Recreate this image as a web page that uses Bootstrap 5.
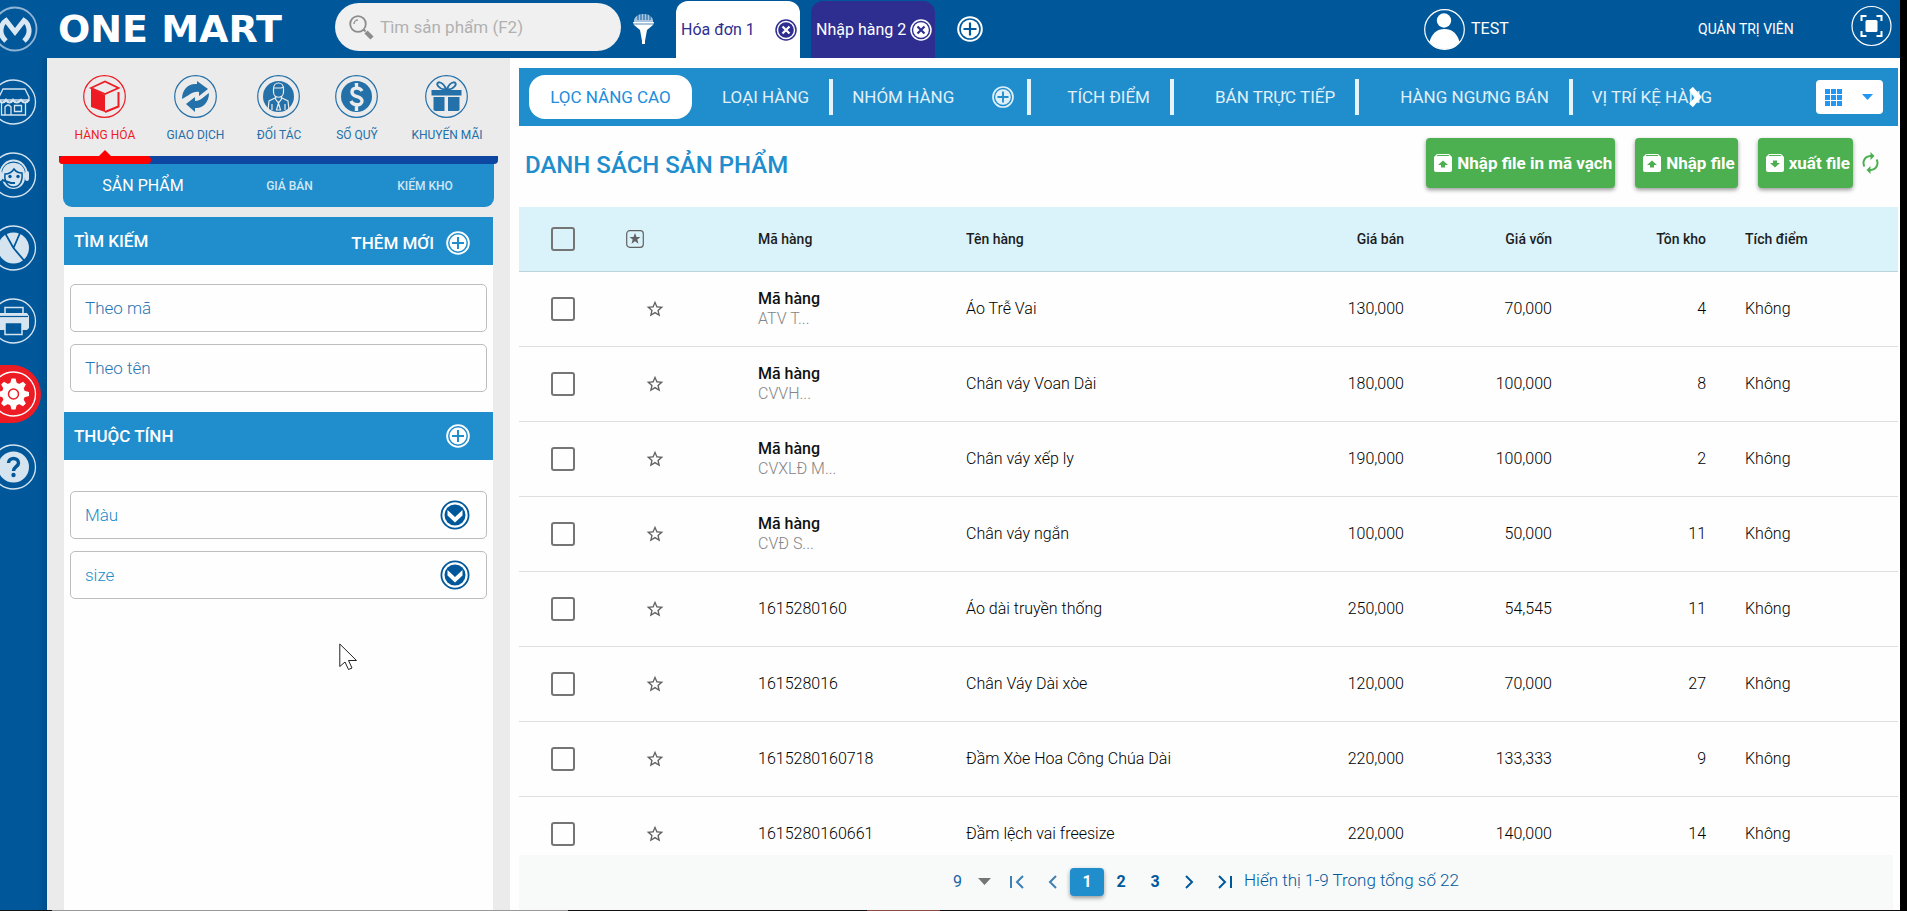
<!DOCTYPE html>
<html lang="vi">
<head>
<meta charset="utf-8">
<meta name="viewport" content="width=device-width, initial-scale=1">
<title>One Mart - Danh sách sản phẩm</title>
<link href="https://cdn.jsdelivr.net/npm/bootstrap@5.3.0/dist/css/bootstrap.min.css" rel="stylesheet">
<style>
:root{--navy:#00589b;--sky:#208dcc;--indigo:#2e2e91;--green:#4caf50}
body{font-family:Roboto,"Liberation Sans",sans-serif;font-size:16px;line-height:20px;color:#1d1d1d;background:#fefefe;border-right:7px solid #000}
button{font-family:inherit}
svg{display:block;flex:none}
a{text-decoration:none}
.plain{background:none;border:0;padding:0;color:inherit}
.fw-md{font-weight:500}
/* header */
.topbar{height:58px;background:var(--navy);color:#fff}
.brand{width:335px;color:#fff;gap:20px;margin-left:-9px}
.brand-name{font:bold 38px/40px "DejaVu Sans",sans-serif}
.search{width:286px;height:48px;margin:3px 0 0 9px;padding:0 0 0 14px;border-radius:24px;background:#f0f0f0;gap:6px}
.search input{flex:1;min-width:0;border:0;background:none;padding:0;font-size:17px;outline:0}
.search input::placeholder{color:#b0b0b0;opacity:1}
.funnel{margin:0 22px 0 12px}
.doc-tab{height:57px;border-radius:12px 12px 0 0;background:#fff;color:var(--indigo);width:124px;padding:0 3px 0 5px}
.doc-tab.alt{background:var(--indigo);color:#fff;margin-left:11px}
.add-doc{margin-left:22px}
.who{gap:6px;margin-left:auto;width:254px}
.role{font-size:14px;width:157px}
/* rail */
.rail{width:47px;background:var(--navy);padding-top:15px;gap:15px;box-shadow:inset -10px 0 8px -8px #003f7499}
.rail a{display:flex;align-items:center;width:41px;height:58px;border-radius:0 29px 29px 0}
.rail a svg{margin-left:-9px}
.rail a.on{background:#ed1c24}
/* side panel */
.side{width:463px;background:#ebebeb;padding:0 17px}
.modules{margin:0 -5px;height:106px;border-bottom:8px solid #0d47a1;border-radius:0 0 4px 4px}
.modules a{min-width:78px;padding:17px 16px 0;color:#2470a8;font-size:12px;gap:7px;position:relative}
.modules a.on{color:#ed1c24}
.modules a.on::before{content:"";position:absolute;left:0;right:0;bottom:-8px;height:8px;background:red;border-radius:4px}
.modules a.on::after{content:"";position:absolute;left:50%;bottom:0;margin-left:-6px;border:6px solid transparent;border-top:0;border-bottom-color:red}
.subtabs{height:43px;background:var(--sky);border-radius:0 0 9px 9px;margin:0 -1px 10px}
.subtabs a{flex:1;text-align:center;color:#d0e7f5;font-size:12px;font-weight:500}
.subtabs a.on{color:#fff;font-size:16px;font-weight:400;flex:0 0 160px}
.subtabs a:last-child{flex:0 0 138px}
.sec-head{height:48px;background:var(--sky);color:#fff;padding:0 23px 0 10px;font-size:17px;font-weight:500}
.sec-body{background:#fefefe;padding:19px 6px;gap:12px}
.sec-body.search-by{padding-bottom:20px}
.sec-body.attrs{padding-top:31px}
.field{height:48px;border:1px solid #bdbdbd;border-radius:5px;position:relative}
.field input,.field select{width:100%;height:100%;border:0;background:none;padding:0 14px;font-size:17px;font-weight:300;color:var(--sky);appearance:none;outline:0}
.field input::placeholder{color:#2a75b3;opacity:1}
.field svg{position:absolute;right:16px;top:8px;pointer-events:none}
.pointer{position:absolute;left:339px;top:643px;pointer-events:none}
/* main */
.work{padding:10px 2px 0 9px}
.filters{height:58px;background:var(--sky);color:#e0f0f9;padding:0 15px 0 10px;font-size:17px}
.filters a{color:inherit;white-space:nowrap}
.filters a.pill{background:#fff;color:#208ddc;width:163px;height:44px;border-radius:16px;margin-right:30px}
.bar{width:4px;height:36px;background:#e6f3fa;margin:0 19px 0 20px;flex:none}
.bar.wide{margin-right:41px}
.bar.after-add{margin:0 36px 0 13px}
.add-group{margin-left:38px}
.more{position:absolute;right:10px;top:0}
.view{width:67px;height:34px;background:#fff;border-radius:4px;padding:0 10px 0 9px;color:#2196f3}
.title{color:var(--sky);font-size:24px;line-height:32px;font-weight:500;margin:0;padding-top:4px}
.headline{height:81px;padding:0 18px 7px 6px}
.acts{gap:20px}
.act{height:50px;background:var(--green);color:#fff;font-size:17px;font-weight:700;border-radius:4px;box-shadow:0 2px 4px #0006;gap:5px;padding:0 3px 0 8px;white-space:nowrap}
.list{flex:1 1 0;min-height:0;overflow:hidden}
.goods{width:100%;table-layout:fixed;border-collapse:separate;border-spacing:0}
.goods th{height:65px;background:#daf3fb;border-bottom:1px solid #bcd3dc;font-size:14px;font-weight:500;padding:0 16px 1px}
.goods td{height:75px;border-bottom:1px solid #dedede;padding:0 16px;font-weight:300;color:#000}
.goods tr>:nth-child(1){padding-left:32px}
.goods tr>:nth-child(8){padding-left:23px}
.goods tr>:nth-child(2){padding-left:19px}
.goods tbody tr>:nth-child(2){padding-left:38px}
.goods input{appearance:none;display:block;width:24px;height:24px;margin:0;border:2px solid #757575;border-radius:3px}
.goods td.code{color:#858585}
.goods b{display:block;color:#111;font-weight:500}
.pager{height:55px;background:#f8faf9;margin-right:5px;color:#1a64a4;padding-bottom:2px}
.pager button{color:var(--navy)}
.pg{width:34px;height:28px;border-radius:4px;font-weight:700;font-size:16px}
.pager .pg.on{background:var(--sky);color:#fff;box-shadow:0 2px 4px #0006}
.pager select{appearance:none;border:0;background:none;color:#1a64a4;width:25px;font-size:16px;outline:0;padding:0}
.count{font-size:17px;font-weight:300;color:var(--navy);margin-left:12px;padding-bottom:3px}
.taskline{height:1px;background:linear-gradient(90deg,#111 52px,#999 52px 568px,#111 568px 867px,#8a4a3c 867px 940px,#111 940px)}
</style>
</head>
<body class="vh-100 d-flex flex-column overflow-hidden position-relative">
<svg width="0" height="0" class="position-absolute" aria-hidden="true">
  <defs>
    <symbol id="plus" viewBox="0 0 26 26"><circle cx="13" cy="13" r="11.8" fill="none" stroke="currentColor" stroke-width="2"/><circle cx="13" cy="13" r="9.2" fill="currentColor"/><path d="M13 6.5v13M6.500 13h13" stroke="var(--bgc,#208dcc)" stroke-width="2.200"/></symbol>
    <symbol id="close" viewBox="0 0 22 22"><circle cx="11" cy="11" r="10" fill="none" stroke="currentColor" stroke-width="1.500"/><circle cx="11" cy="11" r="7.800" fill="currentColor"/><path d="M7.500 7.500l7 7M14.500 7.500l-7 7" stroke="var(--bgc)" stroke-width="2.200"/></symbol>
    <symbol id="star" viewBox="0 0 24 24"><path fill="#616161" d="M22 9.240l-7.190-.62L12 2 9.190 8.630 2 9.240l5.460 4.730L5.820 21 12 17.270 18.180 21l-1.630-7.030L22 9.240zM12 15.400l-3.760 2.270 1-4.280-3.320-2.880 4.380-.38L12 6.100l1.710 4.040 4.380.38-3.320 2.880 1 4.280L12 15.400z"/></symbol>
    <symbol id="up" viewBox="0 0 18 18"><path fill="#fff" d="M3 0h12l3 3v13a2 2 0 0 1-2 2H2a2 2 0 0 1-2-2V3z"/><path fill="#4caf50" d="M2.500 2l1-1h11l1 1zM9 6.500l5 4.500h-3v2.500H7V11H4z"/></symbol>
    <symbol id="down" viewBox="0 0 18 18"><path fill="#fff" d="M3 0h12l3 3v13a2 2 0 0 1-2 2H2a2 2 0 0 1-2-2V3z"/><path fill="#4caf50" d="M2.500 2l1-1h11l1 1zM9 13.500L14 9h-3V6.500H7V9H4z"/></symbol>
    <symbol id="drop" viewBox="0 0 30 30"><circle cx="15" cy="15" r="13.600" fill="none" stroke="#00589b" stroke-width="1.800"/><circle cx="15" cy="15" r="10.500" fill="#00589b"/><path d="M7.500 10v5.500l7.500 7 7.500-7V10L15 17z" fill="#fff"/></symbol>
  </defs>
</svg>

<header class="topbar d-flex align-items-center flex-shrink-0">
  <a href="#" class="brand d-flex align-items-center flex-shrink-0">
    <svg width="47" height="46" viewBox="0 0 47 46"><circle cx="24" cy="23" r="21.500" fill="none" stroke="#8fb4d6" stroke-width="1.800"/><path d="M15 35C6 27 11 17 15 14.500L24 26l9-11.500C37 17 42 27 33 35" fill="none" stroke="#dbe8f3" stroke-width="5"/></svg>
    <span class="brand-name text-nowrap">ONE MART</span>
  </a>
  <form class="search d-flex align-items-center flex-shrink-0 align-self-start">
    <svg width="25" height="25" viewBox="0 0 25 25"><circle cx="9" cy="9" r="7.800" fill="none" stroke="#8c8c8c" stroke-width="1.800"/><path d="M5 9a4 4 0 0 1 4-4" fill="none" stroke="#999" stroke-width="1.500"/><path d="M14.500 14.500l2 2" stroke="#8c8c8c" stroke-width="2"/><path d="M17 17l6 6" stroke="#8c8c8c" stroke-width="4.500"/></svg>
    <input type="text" placeholder="Tìm sản phẩm (F2)" aria-label="Tìm sản phẩm">
  </form>
  <button class="plain funnel" aria-label="Lọc"><svg width="21" height="31" viewBox="0 0 21 31"><path d="M1 6C3 1 6 0 10.500 0S18 1 20 6v2H1z" fill="#a8c6e0"/><path d="M5 0v6M8 0v6M11 0v6M14 0v6M17 1v5" stroke="#00589b"/><path d="M0 8h21l-1 3-6 5-2 11v3h-3v-3L7 16l-6-5z" fill="#fff"/><path d="M1 10h19" stroke="#00589b" stroke-width=".7"/></svg></button>
  <div class="doc-tab d-flex align-items-center justify-content-between align-self-end flex-shrink-0"><a href="#" class="text-reset">Hóa đơn 1</a><button class="plain" style="--bgc:#fff" aria-label="Đóng"><svg width="22" height="22"><use href="#close"/></svg></button></div>
  <div class="doc-tab alt d-flex align-items-center justify-content-between align-self-end flex-shrink-0"><a href="#" class="text-reset text-nowrap">Nhập hàng 2</a><button class="plain" style="--bgc:#2e2e91" aria-label="Đóng"><svg width="22" height="22"><use href="#close"/></svg></button></div>
  <button class="plain add-doc" style="--bgc:#00589b" aria-label="Thêm"><svg width="26" height="26"><use href="#plus"/></svg></button>
  <a href="#" class="who d-flex align-items-center text-white">
    <svg width="41" height="41" viewBox="0 0 41 41"><circle cx="20.500" cy="20.500" r="19.800" fill="none" stroke="#fff" stroke-width="1.200"/><circle cx="20" cy="11.500" r="7.200" fill="#fff"/><path d="M5.500 33C8 24 13 20 20.500 20S33 24 35.500 33A19.500 19.500 0 0 1 5.500 33z" fill="#fff"/></svg>
    <span>TEST</span>
  </a>
  <a href="#" class="role text-white text-nowrap ms-3 ps-1">QUẢN TRỊ VIÊN</a>
  <button class="plain me-2 align-self-start mt-1" aria-label="Toàn màn hình"><svg width="41" height="44" viewBox="0 0 41 44"><circle cx="20.500" cy="22" r="19.500" fill="none" stroke="#fff" stroke-width="1.200"/><rect x="14.500" y="16" width="12" height="12" rx="1.500" fill="#fff"/><path d="M10.500 17v-5h5M25.500 12h5v5M30.500 27v5h-5M15.500 32h-5v-5" fill="none" stroke="#fff" stroke-width="2"/></svg></button>
</header>

<div class="d-flex flex-grow-1" style="min-height:0">
  <nav class="rail d-flex flex-column flex-shrink-0 overflow-hidden">
    <a href="#" aria-label="Cửa hàng"><svg width="46" height="46" viewBox="0 0 46 46" fill="none" stroke="#d6e4f0" stroke-width="1.300"><circle cx="22.500" cy="23" r="22"/><path d="M12 10h22l4 8v3H8v-3z"/><path d="M8 21q3.500 5 7 0q3.500 5 7 0q3.500 5 8 0q4 5 8 0" stroke-width="2.200"/><path d="M10.500 24v12h24V24M14 36v-8q3-4 6 0v8M23.500 26.500h7v6h-7z"/></svg></a>
    <a href="#" aria-label="Hỗ trợ"><svg width="46" height="46" viewBox="0 0 46 46" fill="#d6e4f0"><circle cx="22.500" cy="23" r="22" fill="none" stroke="#d6e4f0" stroke-width="1.300"/><path d="M9 22C11 4 34 4 36 22" fill="none" stroke="#d6e4f0" stroke-width="2"/><rect x="7" y="19" width="4" height="10" rx="2"/><rect x="34" y="19" width="4" height="10" rx="2"/><path d="M11 22C11 7 34 7 34 22v3c0 16-23 16-23 0z"/><path d="M14 22c4 0 7-2 9-5 2 3 5 4 8 4 1 9-3 14-8.500 14S13 30 14 22z" fill="none" stroke="#00589b" stroke-width="1.500"/><circle cx="19" cy="24.500" r="1.700" fill="#00589b"/><circle cx="27" cy="24.500" r="1.700" fill="#00589b"/><path d="M11 28l9 3h4" stroke="#00589b" stroke-width="2" fill="none"/></svg></a>
    <a href="#" aria-label="Báo cáo"><svg width="46" height="46" viewBox="0 0 46 46"><circle cx="22.500" cy="23" r="22" fill="none" stroke="#d6e4f0" stroke-width="1.300"/><circle cx="22.500" cy="23" r="15.500" fill="#d6e4f0"/><path d="M14 8l8.500 15 11 13M22.500 23L29 8" fill="none" stroke="#00589b" stroke-width="1.800"/></svg></a>
    <a href="#" aria-label="In"><svg width="46" height="46" viewBox="0 0 46 46"><circle cx="22.500" cy="23" r="22" fill="none" stroke="#d6e4f0" stroke-width="1.300"/><path d="M14 15V9.500h18V15" fill="none" stroke="#d6e4f0" stroke-width="1.500"/><path d="M9 15h27l2 3v12l-2 2H9l-2-2V18z" fill="#d6e4f0"/><path d="M8 18.500h29" stroke="#00589b" stroke-width="1.200"/><path d="M14 24.500h17v12H14z" fill="#00589b" stroke="#d6e4f0" stroke-width="1.500"/></svg></a>
    <a href="#" class="on" aria-label="Cài đặt"><svg width="46" height="46" viewBox="0 0 46 46"><circle cx="22.500" cy="23" r="22" fill="none" stroke="#fff" stroke-width="1.300"/><g fill="#fff"><circle cx="22.500" cy="23" r="11.500"/><path id="tooth" d="M19 13l1.500-5.500h4L26 13zM19 33l1.500 5.500h4L26 33zM12.500 19.500L7 21v4l5.500 1.500zM32.500 19.500L38 21v4l-5.500 1.500z"/><use href="#tooth" transform="rotate(45 22.500 23)"/></g><circle cx="22.500" cy="23" r="5" fill="none" stroke="#ed1c24" stroke-width="1.500"/></svg></a>
    <a href="#" aria-label="Trợ giúp"><svg width="46" height="46" viewBox="0 0 46 46"><circle cx="22.500" cy="23" r="22" fill="none" stroke="#d6e4f0" stroke-width="1.300"/><circle cx="22.500" cy="23" r="15.500" fill="#d6e4f0"/><path d="M17.500 19c0-6 10-6 10 0 0 3.500-5 4-5 8" fill="none" stroke="#00589b" stroke-width="3.500"/><circle cx="22.500" cy="31" r="2.200" fill="#00589b"/></svg></a>
  </nav>

  <aside class="side d-flex flex-column flex-shrink-0">
    <nav class="modules d-flex flex-shrink-0">
      <a href="#" class="on d-flex flex-column align-items-center text-nowrap"><svg width="43" height="43" viewBox="0 0 43 43"><circle cx="21.500" cy="21.500" r="20.800" fill="none" stroke="currentColor" stroke-width="1.200"/><path d="M8 13l14 7v17L8 32z" fill="currentColor"/><path d="M8 13l14-6.500L35.500 13 22 19z" fill="none" stroke="currentColor" stroke-width="1.800"/><path d="M35.500 17v14.500L22 37" fill="none" stroke="currentColor" stroke-width="2"/></svg>HÀNG HÓA</a>
      <a href="#" class="d-flex flex-column align-items-center text-nowrap"><svg width="43" height="43" viewBox="0 0 43 43"><circle cx="21.500" cy="21.500" r="20.800" fill="none" stroke="currentColor" stroke-width="1.200"/><path d="M8 24c0-10 7-16 15-15V6l11 8-9 7v-4c-7-1-10 4-17 7zM35 18c0 10-7 16-14 15v4l-9-8 9-7v4c6 0 8-4 14-8z" fill="currentColor"/></svg>GIAO DỊCH</a>
      <a href="#" class="d-flex flex-column align-items-center text-nowrap"><svg width="43" height="43" viewBox="0 0 43 43"><circle cx="21.500" cy="21.500" r="20.800" fill="none" stroke="currentColor" stroke-width="1.200"/><circle cx="21.500" cy="21.500" r="15.500" fill="currentColor"/><path d="M16.500 14c0-8 10-8 10 0v3c0 7-10 7-10 0zM16 13h8l3-1M18.500 21v3l3 4 3-4v-3M18 23l-6 3-1 9M25 23l6 3 1 9M21.500 28l-2 7h4zM15 29v6M28 29v6" fill="none" stroke="#ebebeb" stroke-width="1.200"/></svg>ĐỐI TÁC</a>
      <a href="#" class="d-flex flex-column align-items-center text-nowrap"><svg width="43" height="43" viewBox="0 0 43 43"><circle cx="21.500" cy="21.500" r="20.800" fill="none" stroke="currentColor" stroke-width="1.200"/><circle cx="21.500" cy="21.500" r="15.500" fill="currentColor"/><path d="M27 16c-2-4-10-4-10 1 0 6 10 3.500 10 9 0 5-9 5-11 0M21.500 8v5M21.500 30v6" fill="none" stroke="#ebebeb" stroke-width="3.400"/></svg>SỔ QUỸ</a>
      <a href="#" class="d-flex flex-column align-items-center text-nowrap"><svg width="43" height="43" viewBox="0 0 43 43"><circle cx="21.500" cy="21.500" r="20.800" fill="none" stroke="currentColor" stroke-width="1.200"/><path d="M6.500 15h30v5.500h-30zM8.500 22h11v14H10l-1.500-1zM23 22h11.500v13L33 36H23z" fill="currentColor"/><path d="M21.500 15C17 4 10 7 13 11s6 3 8.500 4C26 4 33 7 30 11s-6 3-8.500 4" fill="none" stroke="currentColor" stroke-width="2"/></svg>KHUYẾN MÃI</a>
    </nav>
    <nav class="subtabs d-flex align-items-center flex-shrink-0"><a href="#" class="on">SẢN PHẨM</a><a href="#">GIÁ BÁN</a><a href="#">KIỂM KHO</a></nav>
    <div class="sec-head d-flex align-items-center justify-content-between flex-shrink-0"><span>TÌM KIẾM</span><button class="plain d-flex align-items-center gap-2 fw-md pt-1"><span class="me-1">THÊM MỚI</span><svg width="24" height="24"><use href="#plus"/></svg></button></div>
    <div class="sec-body search-by d-flex flex-column flex-shrink-0">
      <div class="field"><input type="text" placeholder="Theo mã" aria-label="Theo mã"></div>
      <div class="field"><input type="text" placeholder="Theo tên" aria-label="Theo tên"></div>
    </div>
    <div class="sec-head d-flex align-items-center justify-content-between flex-shrink-0"><span>THUỘC TÍNH</span><button class="plain" aria-label="Thêm thuộc tính"><svg width="24" height="24"><use href="#plus"/></svg></button></div>
    <div class="sec-body attrs d-flex flex-column flex-grow-1">
      <div class="field flex-shrink-0"><select aria-label="Màu"><option>Màu</option></select><svg width="30" height="30"><use href="#drop"/></svg></div>
      <div class="field flex-shrink-0"><select aria-label="size"><option>size</option></select><svg width="30" height="30"><use href="#drop"/></svg></div>
    </div>
  </aside>

  <main class="work d-flex flex-column flex-grow-1" style="min-width:0">
    <nav class="filters d-flex align-items-center flex-shrink-0">
      <a href="#" class="pill d-flex align-items-center justify-content-center">LỌC NÂNG CAO</a>
      <a href="#">LOẠI HÀNG</a><span class="bar"></span>
      <a href="#">NHÓM HÀNG</a><button class="plain add-group" aria-label="Thêm nhóm hàng"><svg width="22" height="22"><use href="#plus"/></svg></button><span class="bar after-add"></span>
      <a href="#">TÍCH ĐIỂM</a><span class="bar wide"></span>
      <a href="#">BÁN TRỰC TIẾP</a><span class="bar wide"></span>
      <a href="#">HÀNG NGƯNG BÁN</a><span class="bar"></span>
      <a href="#" class="position-relative">VỊ TRÍ KỆ HÀNG<svg class="more" width="13" height="20" viewBox="0 0 13 20"><path d="M2 1.500l7.500 8.500L2 18.500" fill="none" stroke="#fff" stroke-width="5"/></svg></a>
      <button class="plain view d-flex align-items-center justify-content-between ms-auto flex-shrink-0" aria-label="Kiểu xem"><svg width="17" height="17" viewBox="0 0 17 17" fill="currentColor"><path d="M0 0h5v5H0zM6 0h5v5H6zM12 0h5v5h-5zM0 6h5v5H0zM6 6h5v5H6zM12 6h5v5h-5zM0 12h5v5H0zM6 12h5v5H6zM12 12h5v5h-5z"/></svg><svg width="11" height="6" viewBox="0 0 11 6" fill="currentColor"><path d="M0 0h11L5.500 6z"/></svg></button>
    </nav>
    <div class="headline d-flex align-items-center flex-shrink-0">
      <h1 class="title me-auto">DANH SÁCH SẢN PHẨM</h1>
      <div class="acts d-flex">
        <button class="plain act d-flex align-items-center"><svg width="18" height="18"><use href="#up"/></svg>Nhập file in mã vạch</button>
        <button class="plain act d-flex align-items-center"><svg width="18" height="18"><use href="#up"/></svg>Nhập file</button>
        <button class="plain act d-flex align-items-center"><svg width="18" height="18"><use href="#down"/></svg>xuất file</button>
      </div>
      <button class="plain ms-2" aria-label="Làm mới"><svg width="19" height="24" viewBox="3 0 18 24"><path fill="#4caf50" d="M12 6v3l4-4-4-4v3c-4.420 0-8 3.580-8 8 0 1.570.46 3.030 1.240 4.260L6.700 14.800c-.45-.83-.7-1.790-.7-2.800 0-3.310 2.690-6 6-6zm6.760 1.740L17.300 9.200c.44.84.7 1.790.7 2.800 0 3.310-2.690 6-6 6v-3l-4 4 4 4v-3c4.420 0 8-3.580 8-8 0-1.570-.46-3.030-1.240-4.260z"/></svg></button>
    </div>
    <div class="list">
      <table class="goods">
        <colgroup><col style="width:88px"><col style="width:135px"><col style="width:208px"><col><col style="width:148px"><col style="width:148px"><col style="width:154px"><col style="width:176px"></colgroup>
        <thead><tr><th><input type="checkbox" aria-label="Chọn tất cả"></th><th><svg width="18" height="18" viewBox="0 0 18 18"><rect x=".7" y=".7" width="16.600" height="16.600" rx="3" fill="none" stroke="#616161" stroke-width="1.200"/><path fill="#616161" d="M9 3l1.500 4h4l-3.200 2.500 1.200 4.200L9 11.200l-3.500 2.500 1.200-4.200L3.500 7h4z"/></svg></th><th>Mã hàng</th><th>Tên hàng</th><th class="text-end">Giá bán</th><th class="text-end">Giá vốn</th><th class="text-end">Tồn kho</th><th>Tích điểm</th></tr></thead>
        <tbody>
          <tr><td><input type="checkbox" aria-label="Chọn"></td><td><svg width="20" height="20"><use href="#star"/></svg></td><td class="code"><b>Mã hàng</b>ATV T...</td><td>Áo Trễ Vai</td><td class="text-end">130,000</td><td class="text-end">70,000</td><td class="text-end">4</td><td>Không</td></tr>
          <tr><td><input type="checkbox" aria-label="Chọn"></td><td><svg width="20" height="20"><use href="#star"/></svg></td><td class="code"><b>Mã hàng</b>CVVH...</td><td>Chân váy Voan Dài</td><td class="text-end">180,000</td><td class="text-end">100,000</td><td class="text-end">8</td><td>Không</td></tr>
          <tr><td><input type="checkbox" aria-label="Chọn"></td><td><svg width="20" height="20"><use href="#star"/></svg></td><td class="code"><b>Mã hàng</b>CVXLĐ M...</td><td>Chân váy xếp ly</td><td class="text-end">190,000</td><td class="text-end">100,000</td><td class="text-end">2</td><td>Không</td></tr>
          <tr><td><input type="checkbox" aria-label="Chọn"></td><td><svg width="20" height="20"><use href="#star"/></svg></td><td class="code"><b>Mã hàng</b>CVĐ S...</td><td>Chân váy ngắn</td><td class="text-end">100,000</td><td class="text-end">50,000</td><td class="text-end">11</td><td>Không</td></tr>
          <tr><td><input type="checkbox" aria-label="Chọn"></td><td><svg width="20" height="20"><use href="#star"/></svg></td><td>1615280160</td><td>Áo dài truyền thống</td><td class="text-end">250,000</td><td class="text-end">54,545</td><td class="text-end">11</td><td>Không</td></tr>
          <tr><td><input type="checkbox" aria-label="Chọn"></td><td><svg width="20" height="20"><use href="#star"/></svg></td><td>161528016</td><td>Chân Váy Dài xòe</td><td class="text-end">120,000</td><td class="text-end">70,000</td><td class="text-end">27</td><td>Không</td></tr>
          <tr><td><input type="checkbox" aria-label="Chọn"></td><td><svg width="20" height="20"><use href="#star"/></svg></td><td>1615280160718</td><td>Đầm Xòe Hoa Công Chúa Dài</td><td class="text-end">220,000</td><td class="text-end">133,333</td><td class="text-end">9</td><td>Không</td></tr>
          <tr><td><input type="checkbox" aria-label="Chọn"></td><td><svg width="20" height="20"><use href="#star"/></svg></td><td>1615280160661</td><td>Đầm lệch vai freesize</td><td class="text-end">220,000</td><td class="text-end">140,000</td><td class="text-end">14</td><td>Không</td></tr>
        </tbody>
      </table>
    </div>
    <footer class="pager d-flex align-items-center justify-content-center flex-shrink-0">
      <select aria-label="Số dòng"><option>9</option></select>
      <svg width="13" height="7" viewBox="0 0 13 7"><path d="M0 0h13L6.500 7z" fill="#757575"/></svg>
      <button class="plain opacity-75" style="margin-left:19px" aria-label="Trang đầu"><svg width="14" height="14" viewBox="0 0 14 14" fill="none" stroke="currentColor" stroke-width="2"><path d="M1 1v12M13 1L7 7l6 6"/></svg></button>
      <button class="plain ms-4 opacity-75" aria-label="Trang trước"><svg width="9" height="14" viewBox="0 0 9 14" fill="none" stroke="currentColor" stroke-width="2"><path d="M8 1L2 7l6 6"/></svg></button>
      <button class="plain pg on" style="margin-left:13px">1</button><button class="plain pg">2</button><button class="plain pg">3</button>
      <button class="plain" style="margin-left:13px" aria-label="Trang sau"><svg width="9" height="14" viewBox="0 0 9 14" fill="none" stroke="currentColor" stroke-width="2"><path d="M1 1l6 6-6 6"/></svg></button>
      <button class="plain ms-4" aria-label="Trang cuối"><svg width="14" height="14" viewBox="0 0 14 14" fill="none" stroke="currentColor" stroke-width="2"><path d="M1 1l6 6-6 6M13 1v12"/></svg></button>
      <span class="count text-nowrap">Hiển thị 1-9 Trong tổng số 22</span>
    </footer>
  </main>
</div>
<div class="taskline flex-shrink-0"></div>
<svg class="pointer" width="19" height="28" viewBox="0 0 19 28"><path d="M.8 1v22.500L6 19l3.500 7.500 3.500-1.500-3.500-7.500h8z" fill="#fff" stroke="#222" stroke-width="1"/></svg>
<script src="https://cdn.jsdelivr.net/npm/bootstrap@5.3.0/dist/js/bootstrap.bundle.min.js"></script>
</body>
</html>
